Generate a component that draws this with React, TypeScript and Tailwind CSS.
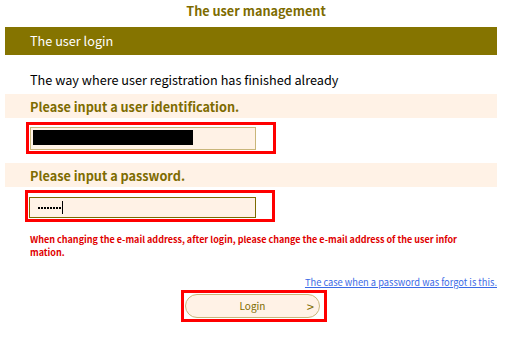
import React from "react";

export default function App() {
  return (
    <div className="w-[512px] h-[339px] bg-white overflow-hidden" style={{ fontFamily: "'Noto Sans CJK JP', 'Noto Sans', sans-serif" }}>
      <div className="h-[27px] flex items-start justify-center pt-[2px] text-[12.7px] leading-[18px] font-bold text-[#7d6b00]">
        The user management
      </div>
      <div className="mx-[5px] w-[492px]">
        <div className="h-[28px] bg-[#857400] text-white text-[12.7px] leading-[20px] flex items-center pl-[25px]">The user login</div>
        <div className="h-[39px] flex items-end pb-[4px] pl-[25px] text-[12.7px] leading-[20px] text-black">
          The way where user registration has finished already
        </div>
        <div className="h-[24px] bg-[#fff2e6] flex items-center pt-[2px] pl-[25px] text-[12.7px] leading-[20px] font-bold text-[#7d6b00]">
          Please input a user identification.
        </div>
        <div className="pt-[4px] pl-[21px]">
          <div className="w-[250px] h-[32px] border-[3px] border-[#ff0000] pt-[2px] pl-[1px]">
            <div className="w-[226px] h-[23px] border border-[#c9b67a] bg-[#fff2e6] p-[2px]">
              <div className="w-[160px] h-[15px] bg-black"></div>
            </div>
          </div>
        </div>
        <div className="h-[24px] mt-[9px] bg-[#fff2e6] flex items-center pt-[1px] pl-[25px] text-[12.7px] leading-[20px] font-bold text-[#7d6b00]">
          Please input a password.
        </div>
        <div className="pt-[3px] pl-[20px]">
          <div className="w-[250px] h-[32px] border-[3px] border-[#ff0000] pt-[4px] pl-[1px]">
            <div className="w-[227px] h-[21px] border border-[#7d6b00] bg-[#fff2e6] flex items-center pl-[8px]">
              <div className="flex gap-[1px] items-center">
                <span className="w-[2px] h-[2px] bg-black"></span>
                <span className="w-[2px] h-[2px] bg-black"></span>
                <span className="w-[2px] h-[2px] bg-black"></span>
                <span className="w-[2px] h-[2px] bg-black"></span>
                <span className="w-[2px] h-[2px] bg-black"></span>
                <span className="w-[2px] h-[2px] bg-black"></span>
                <span className="w-[2px] h-[2px] bg-black"></span>
                <span className="w-[2px] h-[2px] bg-black"></span>
              </div>
              <span className="w-px h-[13px] bg-black ml-[1px]"></span>
            </div>
          </div>
        </div>
        <div className="mt-[11px] pl-[25px] pr-[28px] text-[9px] leading-[13px] font-bold text-[#e00000]">
          When changing the e-mail address, after login, please change the e-mail address of the user infor mation.
        </div>
        <div className="mt-[17px] flex justify-end text-[9.3px] leading-[12px]">
          <a className="text-[#3b6ae6] underline">The case when a password was forgot is this.</a>
        </div>
        <div className="flex justify-center mt-[2px] pl-[6px]">
          <div className="w-[146px] h-[32px] border-[3px] border-[#ff0000] pt-[1px] pl-[1px]">
            <div className="w-[135px] h-[24px] rounded-full border border-[#c9b67a] bg-[#fff2e6] relative flex items-center justify-center text-[10px] leading-[14px] text-[#7d6b00]">
              Login
              <span className="absolute right-[5px] text-[13px] leading-none">&gt;</span>
            </div>
          </div>
        </div>
      </div>
    </div>
  );
}
